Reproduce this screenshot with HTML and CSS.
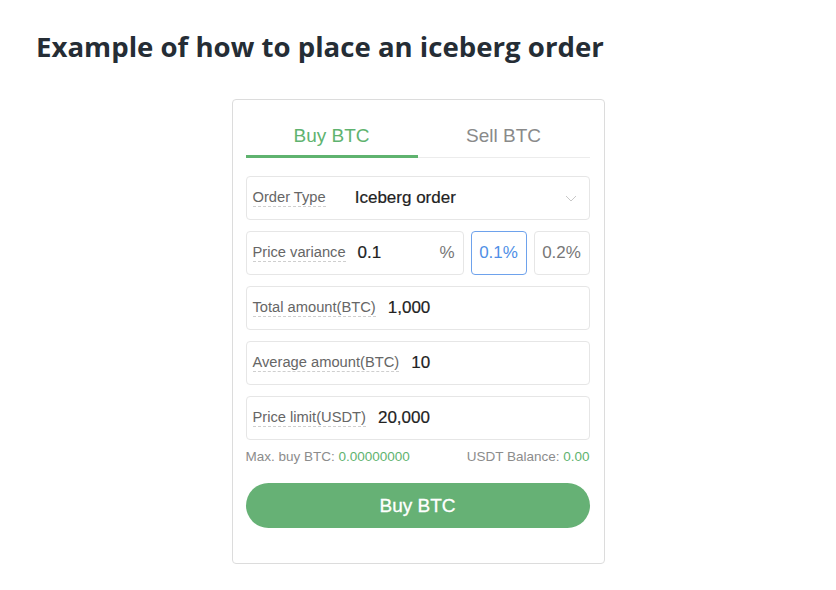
FILE: index.html
```html
<!DOCTYPE html>
<html lang="en">
<head>
    <meta charset="UTF-8">
    <meta name="viewport" content="width=device-width, initial-scale=1.0">
    <title>Iceberg order</title>
    <link rel="stylesheet" href="styles.css">
</head>
<body>
    <h1 class="title">Example of how to place an iceberg order</h1>

    <div class="card">
        <div class="tabs">
            <div class="tab active">Buy BTC</div>
            <div class="tab">Sell BTC</div>
        </div>

        <div class="field">
            <span class="label label-wide">Order Type</span>
            <span class="value">Iceberg order</span>
            <svg class="chevron" width="12" height="7" viewBox="0 0 12 7">
                <path d="M1 1 L6 6 L11 1" fill="none" stroke="#c8c8c8" stroke-width="1"/>
            </svg>
        </div>

        <div class="row">
            <div class="field grow">
                <span class="label">Price variance</span>
                <span class="value">0.1</span>
                <span class="unit">%</span>
            </div>
            <div class="chip selected">0.1%</div>
            <div class="chip">0.2%</div>
        </div>

        <div class="field">
            <span class="label">Total amount(BTC)</span>
            <span class="value">1,000</span>
        </div>

        <div class="field">
            <span class="label">Average amount(BTC)</span>
            <span class="value">10</span>
        </div>

        <div class="field">
            <span class="label">Price limit(USDT)</span>
            <span class="value">20,000</span>
        </div>

        <div class="info">
            <span>Max. buy BTC: <em>0.00000000</em></span>
            <span>USDT Balance: <em>0.00</em></span>
        </div>

        <button class="buy" type="button">Buy BTC</button>
    </div>
</body>
</html>
```

FILE: styles.css
```css
body {
    margin: 0;
    padding: 0;
    background-color: #fff;
    font-family: "Liberation Sans", Arial, sans-serif;
}
.title {
    margin: 0;
    padding: 28px 0 0 36px;
    height: 99px;
    box-sizing: border-box;
    font-family: "Open Sans", sans-serif;
    font-weight: 700;
    font-size: 27.6px;
    line-height: 36px;
    color: #252d35;
}
.card {
    width: 373px;
    margin: 0 auto;
    padding: 0 14px 35px 13px;
    box-sizing: border-box;
    border: 1px solid #dcdcdc;
    border-radius: 4px;
}
.tabs {
    display: flex;
    border-bottom: 1px solid #ececec;
    margin-bottom: 18px;
}
.tab {
    flex: 1;
    text-align: center;
    font-size: 19px;
    line-height: 22px;
    padding: 25px 0 8px;
    color: #8a8a8a;
    border-bottom: 3px solid transparent;
    margin-bottom: -1px;
}
.tab.active {
    color: #5fb36f;
    border-bottom-color: #5fb36f;
}
.field {
    display: flex;
    align-items: center;
    height: 44px;
    padding: 0 8px 0 6px;
    margin-bottom: 11px;
    border: 1px solid #e6e6e6;
    border-radius: 4px;
    box-sizing: border-box;
}
.label {
    font-size: 14.7px;
    color: #666;
    line-height: 18px;
    border-bottom: 1px dashed #cfcfcf;
    margin-right: 12px;
    margin-top: -2px;
}
.label-wide {
    margin-right: 29px;
}
.value {
    font-size: 17px;
    color: #222;
    -webkit-text-stroke: 0.2px #222;
}
.unit {
    margin-left: auto;
    font-size: 17px;
    color: #777;
}
.chevron {
    margin-left: auto;
    margin-right: 4px;
}
.row {
    display: flex;
    gap: 7px;
}
.grow {
    flex: 1;
}
.chip {
    width: 56px;
    height: 44px;
    box-sizing: border-box;
    border: 1px solid #e6e6e6;
    border-radius: 4px;
    display: flex;
    align-items: center;
    justify-content: center;
    font-size: 17px;
    color: #777;
}
.chip.selected {
    border-color: #6ea2ec;
    color: #4f8fe6;
}
.info {
    display: flex;
    justify-content: space-between;
    font-size: 13.5px;
    line-height: 16px;
    color: #8c8c8c;
    margin: -2px 0 18px;
}
.info em {
    font-style: normal;
    color: #5fb36f;
}
.buy {
    display: block;
    width: 100%;
    height: 45px;
    border: none;
    border-radius: 23px;
    background-color: #66b175;
    color: #fff;
    font-family: "Liberation Sans", Arial, sans-serif;
    font-size: 19px;
    -webkit-text-stroke: 0.3px #fff;
    cursor: pointer;
}
```
